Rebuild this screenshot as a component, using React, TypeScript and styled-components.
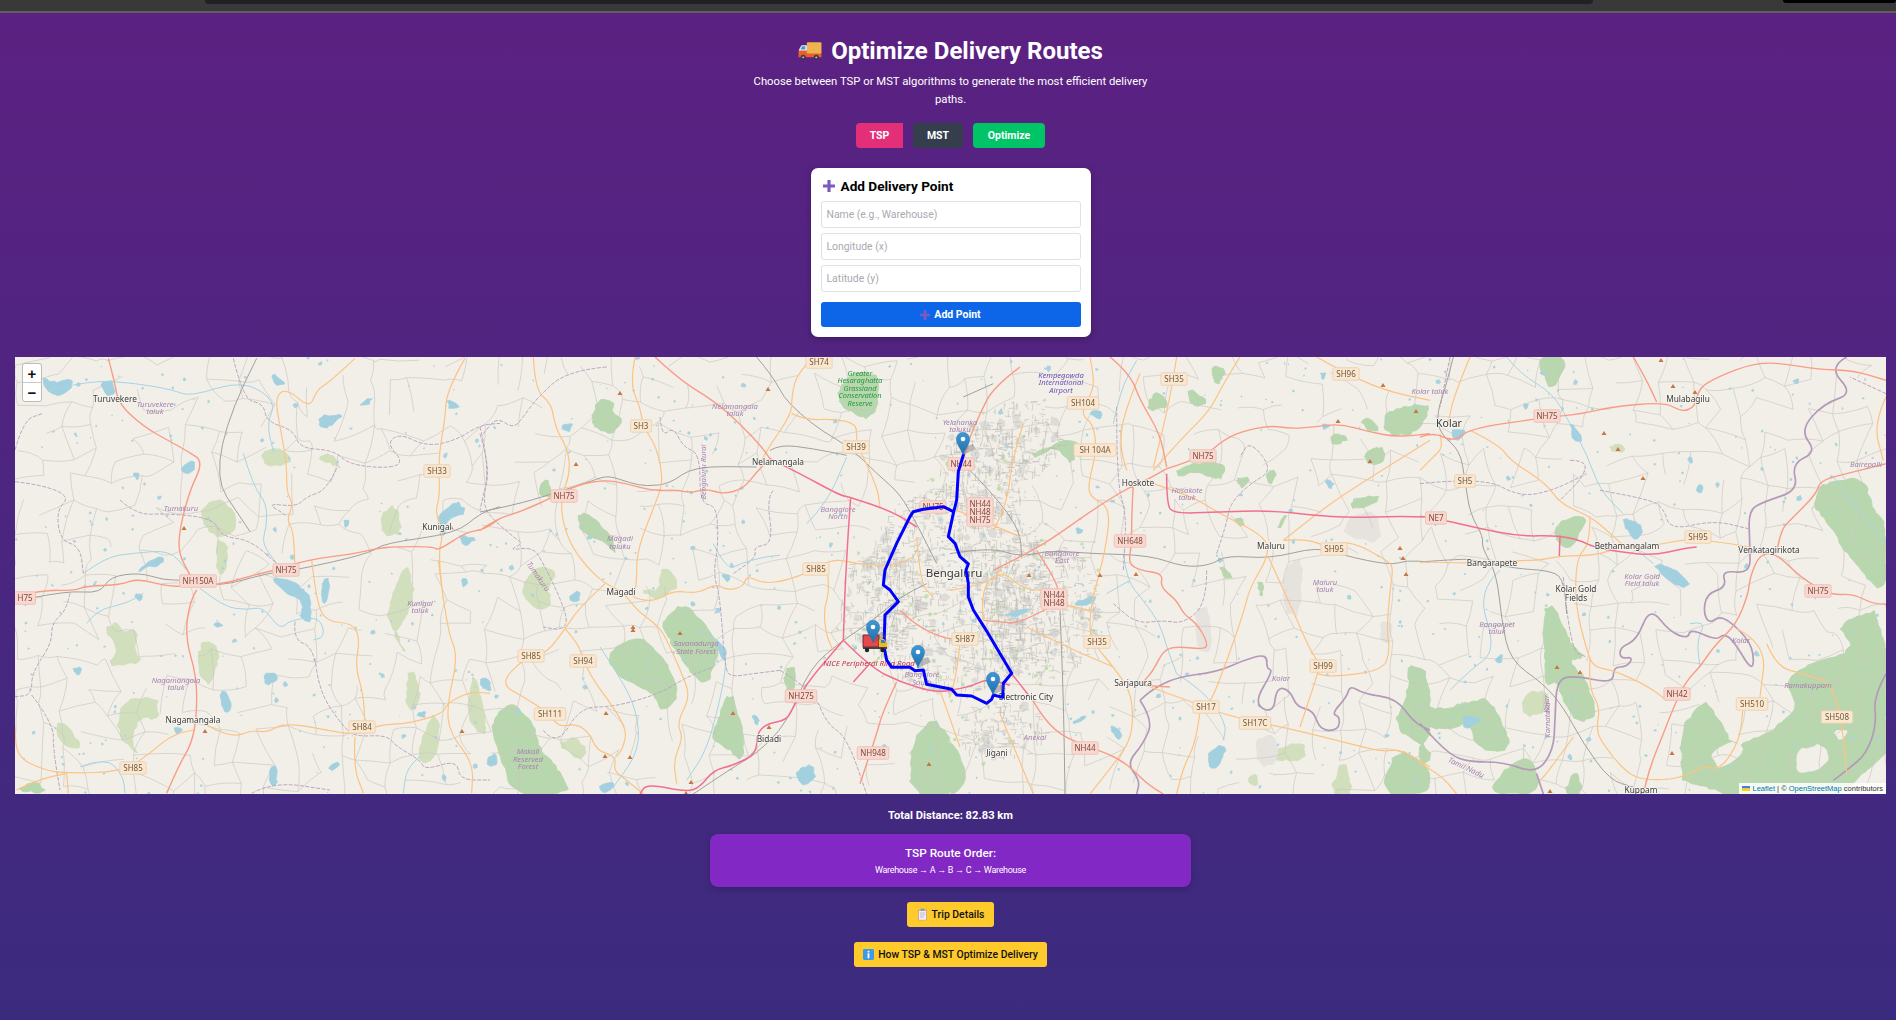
import React from 'react'
import styled, { createGlobalStyle } from 'styled-components'

const GlobalStyle = createGlobalStyle`
    html, body {
        margin: 0;
        padding: 0;
    }
    body {
        font-family: Roboto, "Noto Sans", sans-serif;
        background: #3b2b7e;
    }
`

const Page = styled.div`
    width: 1896px;
    height: 1020px;
    overflow: hidden;
    background: linear-gradient(180deg, #5c2182 0%, #3b2b7e 100%);
`

const TopBar = styled.div`
    display: flex;
    height: 11px;
    background: #393939;
    border-bottom: 2px solid #5f5f5f;
`

const TabStrip = styled.div<{ $left: number; $width: number; $height: number; $color: string }>`
    margin-left: ${(p) => p.$left}px;
    width: ${(p) => p.$width}px;
    height: ${(p) => p.$height}px;
    background: ${(p) => p.$color};
    border-radius: 0 0 6px 6px;
`

const Content = styled.div`
    display: flex;
    flex-direction: column;
    align-items: center;
    padding: 23px 10px 0 15px;
    color: #fff;
`

const Title = styled.h1`
    display: flex;
    align-items: center;
    gap: 9px;
    height: 30px;
    margin: 0;
    font-size: 24px;
    line-height: 30px;
    font-weight: 700;
`

const Lead = styled.p`
    width: 402px;
    margin: 7px 0 0;
    font-size: 11.3px;
    line-height: 18px;
    text-align: center;
`

const ModeRow = styled.div`
    display: flex;
    gap: 10px;
    margin-top: 14px;
`

const ModeButton = styled.button<{ $bg: string; $w: number; $radius: string }>`
    width: ${(p) => p.$w}px;
    height: 25px;
    padding: 0;
    border: 0;
    border-radius: ${(p) => p.$radius};
    background: ${(p) => p.$bg};
    color: #fff;
    font-family: inherit;
    font-size: 10.5px;
    font-weight: 700;
`

const Card = styled.div`
    display: flex;
    flex-direction: column;
    box-sizing: border-box;
    width: 280px;
    height: 169px;
    margin-top: 20px;
    padding: 6px 10px 10px;
    background: #fff;
    border-radius: 7px;
    box-shadow: 0 2px 6px rgba(0, 0, 0, 0.25);
`

const CardTitle = styled.div`
    display: flex;
    align-items: center;
    gap: 6px;
    height: 23px;
    margin: 0 0 4px 2px;
    color: #000;
    font-size: 13.6px;
    font-weight: 700;
`

const Field = styled.input`
    box-sizing: border-box;
    height: 27px;
    margin-bottom: 5px;
    padding: 0 5px;
    border: 1px solid #dfe1e6;
    border-radius: 3px;
    font-family: inherit;
    font-size: 10.4px;
    outline: none;
    &::placeholder {
        color: #a9a9b0;
    }
`

const AddButton = styled.button`
    display: flex;
    align-items: center;
    justify-content: center;
    gap: 4px;
    height: 25px;
    margin-top: 5px;
    border: 0;
    border-radius: 3px;
    background: #0d66e8;
    color: #fff;
    font-family: inherit;
    font-size: 10.5px;
    font-weight: 700;
`

const MapFrame = styled.div`
    position: relative;
    width: 1871px;
    height: 437px;
    margin-top: 20px;
    overflow: hidden;
    background: #f2efe9;
`

const MapDrawing = styled.svg`
    display: block;
    filter: blur(0.5px);
`

const ZoomBox = styled.div`
    position: absolute;
    top: 6px;
    left: 7px;
    width: 20px;
    height: 39px;
    background: #fff;
    border: 1px solid #bbb;
    border-radius: 3px;
    box-sizing: border-box;
`

const ZoomKey = styled.div<{ $top?: boolean }>`
    display: flex;
    align-items: center;
    justify-content: center;
    height: 18px;
    color: #111;
    font-family: "Liberation Sans", sans-serif;
    font-size: 15px;
    font-weight: 700;
    ${(p) => (p.$top ? 'border-bottom: 1px solid #ccc;' : '')}
`

const Attribution = styled.div`
    position: absolute;
    right: 0;
    bottom: 0;
    display: flex;
    align-items: center;
    gap: 3px;
    height: 11px;
    padding: 0 3px;
    background: rgba(255, 255, 255, 0.85);
    color: #333;
    font-family: "Liberation Sans", sans-serif;
    font-size: 7.5px;
    white-space: pre;
`

const AttrLink = styled.span`
    color: #0078a8;
`

const Distance = styled.div`
    height: 18px;
    margin-top: 13px;
    font-size: 11.2px;
    line-height: 18px;
    font-weight: 700;
`

const RouteBox = styled.div`
    box-sizing: border-box;
    width: 481px;
    height: 53px;
    margin-top: 9px;
    padding-top: 11px;
    border-radius: 8px;
    background: #8228c4;
    box-shadow: 0 2px 6px rgba(0, 0, 0, 0.2);
    text-align: center;
`

const RouteTitle = styled.div`
    font-size: 11.8px;
    line-height: 16px;
    font-weight: 500;
`

const RouteText = styled.div`
    margin-top: 2px;
    font-size: 9px;
    line-height: 14px;
    letter-spacing: -0.3px;
`

const YellowButton = styled.button<{ $w: number; $top: number }>`
    display: flex;
    align-items: center;
    justify-content: center;
    gap: 4px;
    box-sizing: border-box;
    width: ${(p) => p.$w}px;
    height: 25px;
    margin-top: ${(p) => p.$top}px;
    padding: 0;
    border: 0;
    border-radius: 3px;
    background: #ffca2c;
    color: #111;
    font-family: inherit;
    font-size: 10.4px;
    font-weight: 500;
`

type Region = {
    o: [number, number]
    forest?: number[][]
    pale?: number[][]
    holes?: number[][]
    water?: number[][]
    river?: number[][]
    border?: number[][]
    state?: number[][]
    rail?: number[][]
    sec?: number[][]
    pri?: number[][]
    trunk?: number[][]
}

// coordinates below are read off crops of the map, 3x, relative to `o`
const regions: Region[] = [
    {
        o: [0, 340],
        pale: [
            [780, 335, 830, 325, 870, 345, 870, 370, 800, 380],
            [950, 350, 990, 340, 1025, 385, 1000, 375],
            [595, 520, 650, 470, 710, 520, 700, 580, 640, 590],
            [645, 600, 680, 610, 685, 670, 655, 720],
            [1140, 520, 1190, 495, 1205, 580, 1150, 585],
        ],
        water: [
            [540, 380, 585, 360, 585, 395, 550, 400],
            [125, 110, 160, 130, 220, 115, 210, 155, 150, 170],
            [300, 130, 340, 120, 345, 165, 320, 165],
            [955, 230, 1035, 220, 985, 265, 960, 260],
            [1340, 180, 1390, 200, 1350, 210],
            [1075, 190, 1125, 170, 1100, 200],
            [810, 100, 860, 130, 825, 140],
            [1310, 530, 1370, 480, 1400, 515, 1345, 540, 1325, 600],
            [1380, 585, 1430, 595, 1400, 615, 1385, 610],
            [410, 700, 450, 660, 495, 645, 480, 680, 440, 680],
            [395, 400, 420, 400, 415, 425],
            [1030, 540, 1050, 540, 1040, 565],
        ],
        river: [
            [150, 150, 270, 120, 410, 130, 520, 150, 570, 170, 730, 120, 830, 185, 800, 250, 820, 335],
            [730, 340, 760, 440, 800, 490, 800, 560, 785, 610, 830, 670],
            [250, 700, 320, 650, 400, 640, 510, 630, 560, 690],
        ],
        border: [
            [45, 425, 130, 435, 210, 470, 170, 510, 180, 600, 240, 620, 250, 700],
            [360, 480, 410, 525, 500, 520, 640, 535, 665, 590, 750, 600, 830, 670],
            [700, 55, 730, 180, 790, 190, 800, 245, 880, 270, 900, 325, 1000, 330, 1050, 375, 1170, 385, 1210, 365, 1160, 310, 1200, 280, 1280, 320, 1370, 300, 1440, 255, 1500, 250],
            [1010, 385, 980, 450, 920, 470, 890, 500, 800, 490, 850, 520, 860, 530],
            [1440, 260, 1470, 380, 1440, 510],
            [45, 330, 70, 240, 130, 220],
        ],
        rail: [
            [90, 775, 200, 752, 300, 760, 330, 710, 420, 698, 490, 720, 550, 720, 660, 740, 800, 700, 890, 690, 1110, 640, 1150, 610, 1370, 580, 1440, 520, 1500, 500],
            [770, 55, 610, 365, 750, 575],
        ],
        sec: [
            [1065, 55, 990, 125, 950, 150, 930, 205, 860, 145, 825, 170, 840, 260, 860, 370, 860, 460, 880, 490, 860, 540, 880, 570, 885, 680],
            [1395, 55, 1340, 150, 1335, 240, 1315, 350, 1320, 470, 1305, 515, 1330, 580, 1315, 640, 1330, 780],
        ],
        pri: [
            [325, 55, 345, 130, 355, 190, 430, 260, 520, 310, 565, 335, 610, 365, 570, 450, 540, 560, 535, 640, 570, 705, 590, 740],
            [45, 770, 130, 750, 220, 752, 260, 738, 360, 735, 415, 715, 510, 742, 660, 735, 760, 705, 830, 690, 920, 660, 1070, 640, 1130, 625, 1190, 620, 1300, 620, 1315, 632, 1400, 575, 1450, 570, 1500, 535],
        ],
    },
    {
        o: [10, 560],
        forest: [[15, 690, 80, 665, 110, 700]],
        pale: [
            [285, 210, 320, 185, 340, 220, 385, 210, 370, 270, 400, 305, 340, 315, 295, 315, 325, 270],
            [570, 260, 590, 240, 630, 265, 605, 380, 565, 340],
            [340, 420, 440, 410, 445, 480, 390, 470, 360, 540, 390, 590, 320, 520],
            [135, 490, 170, 490, 220, 570, 150, 550],
            [1125, 160, 1190, 0, 1215, 110, 1170, 200, 1150, 220, 1190, 290, 1160, 220],
            [1185, 420, 1200, 320, 1235, 400, 1210, 460],
            [1375, 400, 1395, 340, 1425, 470, 1410, 530, 1375, 470],
            [1225, 590, 1260, 460, 1290, 490, 1280, 590, 1240, 610],
        ],
        water: [
            [780, 50, 850, 60, 880, 90, 900, 110, 905, 185, 870, 180, 880, 125, 820, 95],
            [760, 345, 800, 335, 800, 365, 770, 375],
            [630, 395, 655, 395, 665, 450, 640, 460],
            [185, 330, 215, 320, 205, 350],
            [1355, 55, 1375, 60, 1365, 85],
            [490, 500, 520, 510, 500, 525],
            [780, 620, 800, 620, 800, 680, 775, 670],
            [370, 100, 400, 100, 385, 130],
            [610, 190, 640, 190, 625, 205],
            [950, 620, 995, 605, 970, 635],
            [1410, 350, 1440, 360, 1440, 395, 1415, 385],
            [1220, 460, 1250, 450, 1240, 475],
            [940, 60, 960, 50, 950, 130, 935, 120],
        ],
        river: [
            [230, 190, 260, 150, 350, 130, 400, 100],
            [570, 85, 640, 140, 710, 150, 760, 140, 810, 210, 840, 180, 930, 170, 945, 230, 910, 240],
            [1230, 590, 1190, 620, 1180, 700],
            [210, 620, 290, 590, 340, 650, 345, 700],
        ],
        border: [
            [180, 100, 170, 150, 125, 190, 125, 250, 65, 340, 65, 405, 15, 410],
            [855, 185, 850, 240, 910, 260, 930, 400, 1000, 500, 1035, 530, 1130, 525, 1160, 560, 1230, 600, 1245, 630, 1340, 600, 1350, 660, 1440, 660],
            [725, 700, 790, 665, 960, 690],
            [65, 405, 130, 490, 130, 570, 150, 690],
        ],
        sec: [
            [905, 0, 920, 130, 950, 185, 1030, 190, 1050, 240, 1035, 320, 1060, 400, 1065, 500],
            [590, 495, 660, 535, 730, 510, 770, 518, 830, 485, 1040, 530, 1100, 495, 1200, 490, 1300, 460, 1310, 430, 1380, 395, 1440, 400],
            [1285, 0, 1310, 210, 1345, 285, 1310, 440, 1320, 520, 1390, 610, 1385, 700],
            [1035, 530, 1030, 620, 1060, 700],
            [550, 510, 490, 520, 420, 580, 340, 635, 170, 640, 100, 630, 20, 590, 15, 500],
            [170, 640, 175, 700],
            [20, 690, 80, 660, 170, 640],
        ],
        pri: [[560, 90, 540, 120, 525, 230, 560, 350, 560, 470, 545, 550, 510, 610, 470, 700]],
    },
    {
        o: [480, 357],
        forest: [
            [30, 1100, 90, 1030, 160, 1100, 180, 1180, 240, 1240, 270, 1311, 100, 1311, 60, 1200],
            [540, 800, 610, 735, 680, 810, 720, 870, 680, 990, 620, 930, 570, 850],
            [390, 880, 480, 835, 550, 900, 600, 1010, 550, 1070, 520, 1010, 420, 960, 390, 920],
            [700, 1130, 750, 990, 790, 1130, 790, 1215, 740, 1170, 700, 1150],
            [290, 480, 320, 465, 390, 530, 410, 590, 380, 560, 310, 530],
            [335, 190, 350, 130, 400, 130, 395, 170, 430, 190, 400, 230, 350, 215],
            [180, 390, 200, 365, 215, 400, 215, 420, 180, 415],
            [1290, 1311, 1295, 1150, 1360, 1080, 1420, 1160, 1440, 1311],
            [1070, 100, 1130, 40, 1200, 60, 1190, 160, 1150, 190, 1080, 140],
            [910, 940, 950, 930, 930, 1060],
        ],
        pale: [
            [130, 680, 180, 620, 230, 650, 200, 690, 215, 740, 180, 765, 130, 720],
            [480, 700, 535, 700, 550, 620, 600, 680, 540, 730],
            [230, 1160, 290, 1140, 320, 1180, 300, 1210],
            [0, 1010, 20, 1130, 0, 1130],
        ],
        water: [
            [245, 205, 280, 200, 270, 220, 250, 222],
            [950, 1240, 1000, 1220, 1005, 1270, 960, 1285],
            [270, 715, 300, 700, 295, 735, 275, 735],
            [725, 650, 750, 655, 740, 680],
            [700, 840, 740, 880, 735, 925],
            [0, 970, 30, 975, 10, 1000],
            [20, 1200, 50, 1190, 50, 1225, 25, 1225],
            [815, 1075, 840, 1085, 830, 1110],
            [355, 1280, 410, 1280, 370, 1311],
        ],
        river: [
            [700, 560, 740, 640, 780, 620, 850, 600, 900, 595],
            [660, 820, 730, 850, 740, 920, 720, 1030, 680, 1180, 620, 1270],
            [360, 870, 420, 960, 470, 1060, 480, 1180, 400, 1290],
            [980, 500, 1040, 440, 1100, 300],
        ],
        border: [
            [0, 230, 30, 330, 10, 420, 20, 470, 100, 540, 130, 560, 85, 580, 160, 570, 190, 620, 230, 700, 265, 790, 245, 820, 190, 810],
            [380, 30, 260, 40, 165, 130, 130, 180, 100, 215, 50, 180, 10, 230],
            [540, 180, 545, 240, 580, 210, 610, 270, 660, 290, 660, 440, 710, 445, 715, 560, 700, 650, 720, 720, 735, 930, 750, 960, 820, 950, 900, 940],
            [880, 400, 860, 420, 880, 560, 820, 570, 830, 600, 760, 650],
            [190, 1120, 230, 1170, 300, 1050, 400, 1050, 540, 1010, 620, 960, 700, 930],
            [900, 940, 1000, 1000, 1040, 1100, 1100, 1140, 1160, 1311],
        ],
        rail: [
            [0, 465, 100, 445, 220, 410, 340, 370, 385, 355, 450, 378, 500, 388, 570, 380, 640, 328, 830, 330],
            [830, 0, 880, 60, 910, 120, 960, 170, 1030, 225, 1110, 270, 1190, 350, 1260, 410, 1310, 500, 1370, 620],
            [870, 280, 900, 262, 1000, 275, 1100, 295],
            [1090, 850, 1180, 790, 1260, 720, 1340, 680],
            [640, 1311, 760, 1230, 830, 1190, 920, 1100, 990, 930, 1090, 850],
        ],
        sec: [
            [160, 0, 165, 100, 215, 140, 225, 210, 265, 280, 270, 350, 245, 415, 245, 480, 270, 560, 320, 630, 375, 680, 430, 705, 470, 760, 540, 810, 570, 870, 610, 960, 630, 1020, 590, 1100, 610, 1140, 580, 1210, 590, 1280],
            [375, 680, 300, 750, 255, 815, 200, 890, 130, 905, 60, 980, 130, 1020, 210, 1070, 235, 1110, 290, 1100, 330, 1130, 350, 1180, 410, 1200, 400, 1240, 440, 1270, 490, 1311],
            [255, 815, 295, 860, 310, 910, 340, 970, 400, 1050, 440, 1120, 430, 1170, 410, 1200],
            [465, 0, 450, 80, 480, 150, 490, 210, 530, 270, 550, 370, 530, 430, 490, 530, 470, 600, 470, 680, 460, 720],
            [460, 720, 510, 740, 580, 700, 650, 710, 710, 680, 740, 700, 790, 690, 800, 655, 850, 680, 920, 670, 1000, 640, 1060, 605, 1130, 620, 1190, 625, 1250, 625, 1300, 600],
            [1000, 0, 950, 50, 935, 120, 935, 170, 870, 265, 845, 310],
            [935, 170, 980, 190, 1060, 185, 1130, 200, 1130, 250],
            [1040, 620, 1050, 700, 1030, 760, 1040, 840, 1060, 880],
            [1130, 260, 1190, 380, 1200, 450],
            [1310, 540, 1320, 680, 1360, 720],
            [1380, 1000, 1440, 1170],
        ],
        pri: [
            [0, 520, 50, 485, 120, 465, 220, 420, 290, 385, 370, 368, 440, 380, 520, 402, 590, 398, 630, 408, 680, 395, 730, 412, 790, 395, 830, 345, 870, 305],
            [525, 0, 600, 70, 700, 130, 780, 200, 845, 270, 870, 305],
            [1250, 975, 1210, 1060, 1190, 1130, 1170, 1190, 1140, 1280],
            [1260, 760, 1300, 800, 1380, 840, 1440, 850],
        ],
        trunk: [
            [870, 305, 960, 350, 1080, 415, 1110, 420, 1240, 465, 1310, 510],
            [1112, 420, 1105, 520, 1100, 610, 1095, 700, 1090, 850],
            [1090, 850, 1170, 930, 1260, 975, 1360, 1005, 1420, 1000],
            [1090, 850, 1030, 920, 980, 980, 940, 1050, 920, 1090, 860, 1100, 830, 1130, 830, 1190, 760, 1225, 700, 1240, 660, 1290, 620, 1305, 500, 1280, 480, 1311],
            [1120, 975, 1165, 925],
        ],
    },
    {
        o: [950, 357],
        forest: [
            [600, 130, 625, 100, 660, 150, 590, 160],
            [780, 20, 830, 40, 800, 90],
            [715, 90, 780, 140, 720, 150],
            [680, 340, 730, 320, 830, 320, 810, 375, 740, 340, 690, 360],
            [250, 290, 380, 235, 370, 330, 320, 270, 250, 300],
            [1200, 430, 1290, 415, 1280, 440, 1210, 460],
            [980, 510, 1010, 470, 995, 515],
            [810, 620, 850, 660, 820, 665],
            [920, 670, 940, 680, 935, 725],
            [860, 370, 900, 360, 880, 400],
            [1040, 610, 1050, 650, 1035, 640],
            [1290, 1311, 1340, 1170, 1440, 1230, 1440, 1311],
            [1330, 1110, 1380, 990, 1370, 920, 1440, 950, 1440, 1180],
            [1230, 190, 1260, 180, 1290, 220, 1250, 220],
            [1300, 170, 1380, 145, 1440, 150, 1400, 230, 1310, 235],
            [1240, 290, 1290, 265, 1310, 300, 1280, 325, 1250, 320],
            [1140, 230, 1200, 240, 1150, 270],
            [850, 490, 880, 480, 880, 510],
            [950, 340, 980, 340, 960, 390],
            [0, 1150, 30, 1190, 50, 1270, 20, 1311, 0, 1311],
        ],
        pale: [
            [950, 1190, 1060, 1150, 1070, 1210, 960, 1210],
            [1140, 1311, 1180, 1200, 1210, 1311],
            [890, 1270, 920, 1250, 920, 1290],
        ],
        water: [
            [160, 770, 250, 750, 210, 780],
            [370, 740, 440, 715, 430, 740, 380, 745],
            [770, 1200, 800, 1165, 830, 1170, 810, 1220, 780, 1240],
            [480, 1100, 520, 1130, 500, 1150],
            [360, 1100, 410, 1070, 400, 1090],
            [375, 510, 405, 520, 380, 530],
            [410, 165, 455, 160, 450, 190],
            [1110, 50, 1130, 50, 1120, 70],
            [1115, 200, 1145, 205, 1125, 220],
            [1125, 370, 1155, 375, 1140, 400],
        ],
        river: [
            [520, 590, 530, 670, 580, 730, 630, 800, 650, 870, 680, 950],
            [540, 670, 470, 710],
            [680, 950, 760, 1000, 830, 1100, 820, 1150],
            [490, 200, 510, 100, 560, 10],
        ],
        border: [
            [500, 150, 500, 380, 530, 470, 520, 640],
            [800, 590, 830, 500, 840, 440, 900, 380, 970, 340, 900, 250, 870, 300],
            [770, 640, 770, 740, 700, 800, 640, 790, 560, 800, 490, 740],
        ],
        state: [
            [570, 1030, 600, 1000, 680, 960, 800, 945, 880, 910, 950, 890, 950, 935, 970, 940, 910, 1040, 970, 1070, 980, 990, 1020, 1000, 1040, 1050, 1090, 1060, 1110, 1120, 1165, 1120, 1170, 1080, 1145, 1070, 1190, 1020, 1200, 985, 1240, 1010, 1340, 1025, 1390, 1095, 1440, 1120],
            [570, 1030, 610, 1090, 580, 1160, 530, 1220, 570, 1270, 560, 1311],
        ],
        rail: [
            [0, 590, 120, 570, 210, 600, 300, 580, 430, 590, 600, 595, 700, 630, 780, 625, 830, 595, 960, 605, 1100, 570, 1180, 595, 1320, 625, 1370, 610, 1440, 615],
            [40, 320, 130, 410, 210, 520, 215, 600],
            [330, 760, 340, 1000, 345, 1311],
            [40, 120, 130, 80],
        ],
        sec: [
            [680, 0, 660, 130, 610, 330],
            [870, 0, 820, 80, 780, 160, 700, 240, 610, 340],
            [610, 380, 730, 420, 800, 465, 950, 540, 955, 600, 900, 690, 880, 770, 820, 940, 780, 1040, 750, 1060],
            [955, 600, 1020, 740, 1080, 880, 1110, 920, 1100, 960, 1050, 1110],
            [1000, 550, 1100, 470, 1200, 400, 1440, 250],
            [1000, 550, 1070, 545, 1130, 570, 1200, 550, 1310, 610, 1330, 630, 1320, 700, 1310, 820, 1320, 880, 1300, 940, 1150, 960, 1100, 950],
            [1100, 0, 1170, 40, 1300, 100, 1440, 130],
            [420, 0, 430, 50, 430, 100, 390, 170, 430, 200, 440, 280, 415, 380, 420, 420, 480, 450, 470, 560, 440, 680, 420, 760, 420, 840, 440, 870, 490, 930, 540, 1000, 550, 1080, 540, 1150, 500, 1210, 420, 1311],
            [570, 50, 520, 170, 510, 270, 530, 340],
            [220, 200, 190, 290, 170, 440, 130, 520],
            [20, 460, 120, 500, 210, 540],
            [600, 990, 740, 1040, 830, 1075, 950, 1100, 1060, 1125, 1200, 1160, 1300, 1185, 1350, 1175, 1440, 1230],
            [750, 1060, 740, 1150, 700, 1230, 680, 1311],
            [230, 810, 350, 870, 490, 930],
            [150, 1070, 220, 1240, 250, 1311],
            [30, 860, 20, 950, 0, 1020],
            [330, 740, 420, 760],
            [100, 790, 90, 690, 160, 640, 220, 700, 330, 700],
            [0, 700, 120, 680, 150, 640],
        ],
        pri: [
            [480, 0, 540, 50, 570, 130, 630, 230, 650, 330],
            [650, 335, 760, 300, 820, 250, 870, 225, 960, 205, 1020, 215, 1090, 210, 1170, 200, 1260, 225, 1340, 240, 1440, 230],
            [210, 30, 130, 90, 90, 170, 60, 240, 40, 300],
            [650, 335, 590, 370, 540, 390, 440, 450, 300, 550, 210, 600, 130, 640],
            [550, 380, 545, 470, 545, 560, 535, 620, 570, 640, 640, 650, 630, 690, 680, 730, 700, 770, 740, 800, 770, 850, 770, 878, 680, 868, 640, 880, 610, 940, 580, 975],
            [240, 1015, 270, 1070, 330, 1135, 420, 1170, 520, 1210, 590, 1280, 640, 1311],
            [260, 580, 320, 670, 330, 735],
            [300, 750, 210, 800, 150, 795, 100, 790],
            [660, 990, 580, 985],
        ],
        trunk: [
            [650, 350, 650, 440, 670, 470, 800, 465, 960, 460, 1090, 475, 1200, 482, 1340, 478, 1440, 480],
            [185, 950, 240, 1020],
            [0, 1000, 60, 990, 110, 965, 180, 985],
        ],
    },
    {
        o: [1420, 357],
        forest: [
            [1185, 430, 1200, 380, 1330, 360, 1360, 460, 1398, 500, 1398, 725, 1270, 580, 1240, 520, 1185, 450],
            [1398, 750, 1250, 800, 1310, 880, 1140, 930, 1100, 980, 1135, 1050, 1060, 1120, 1020, 1140, 940, 1170, 880, 1060, 850, 1030, 780, 1120, 790, 1311, 1398, 1311],
            [0, 1030, 60, 1060, 130, 1040, 210, 1020, 270, 1150, 250, 1190, 170, 1170, 150, 1100, 60, 1120, 0, 1100],
            [0, 1150, 40, 1200, 0, 1230],
            [200, 1311, 270, 1220, 340, 1200, 360, 1311],
            [430, 1311, 470, 1230, 490, 1311],
            [345, 0, 445, 0, 400, 110],
            [400, 520, 430, 485, 505, 478, 480, 520, 460, 570, 420, 570],
            [370, 760, 400, 740, 450, 860, 495, 900, 440, 910, 500, 970, 530, 1070, 480, 1100, 440, 1050, 410, 970, 375, 990],
            [0, 150, 30, 145, 0, 220],
        ],
        pale: [
            [310, 1010, 380, 1000, 385, 1060, 310, 1080],
            [565, 270, 590, 258, 620, 275, 590, 290],
        ],
        holes: [
            [870, 1190, 940, 1150, 980, 1180, 900, 1240],
            [1130, 1180, 1210, 1160, 1230, 1210, 1190, 1240, 1130, 1250],
            [1240, 1120, 1290, 1120, 1260, 1150],
        ],
        water: [
            [610, 480, 650, 495, 670, 515, 650, 550, 620, 520],
            [700, 620, 760, 630, 810, 680, 790, 695, 730, 660],
            [95, 215, 140, 220, 115, 255, 95, 240],
            [450, 190, 490, 250, 460, 255],
            [225, 905, 250, 890, 240, 920],
            [130, 1070, 190, 1090, 130, 1120],
            [835, 385, 850, 385, 845, 410, 830, 405],
            [810, 300, 820, 320, 800, 310],
            [310, 140, 330, 140, 320, 160],
            [1115, 70, 1135, 65, 1130, 80],
        ],
        river: [
            [260, 0, 300, 50, 400, 110, 450, 200, 500, 290, 540, 400, 610, 470],
            [640, 570, 700, 620],
            [810, 800, 860, 790, 830, 850, 840, 930],
            [240, 640, 170, 700, 230, 880, 150, 940, 90, 1000],
            [1240, 360, 1330, 480, 1398, 560],
        ],
        border: [
            [0, 380, 190, 360, 300, 420, 400, 400, 500, 350],
            [540, 400, 680, 425, 730, 450, 750, 520, 880, 490, 985, 515],
            [1398, 110, 1290, 60],
            [450, 310, 500, 310, 490, 360, 420, 430],
            [90, 0, 60, 150],
            [430, 660, 450, 880, 500, 900],
        ],
        state: [
            [1280, 0, 1225, 30, 1300, 110, 1210, 140, 1140, 220, 1190, 285, 1115, 320, 1135, 400, 1030, 435, 985, 460, 990, 570, 990, 650, 905, 640, 920, 690, 860, 710, 850, 770, 870, 800, 900, 775, 950, 810, 1000, 870, 1000, 950, 940, 850, 910, 830, 890, 850, 810, 815, 805, 845, 750, 825, 690, 750, 650, 850, 600, 870, 600, 905, 640, 900, 620, 930, 580, 930, 580, 980, 460, 955, 410, 970, 405, 1090, 400, 1180, 350, 1250, 250, 1215, 150, 1215, 90, 1195, 0, 1100],
            [350, 1250, 370, 1311],
            [1398, 950, 1360, 1020, 1370, 1100, 1340, 1190, 1280, 1240, 1240, 1270],
        ],
        rail: [
            [100, 0, 80, 80, 50, 170, 60, 230, 120, 280, 135, 370, 150, 470, 190, 540, 185, 570, 230, 650, 245, 790, 270, 910, 370, 980, 430, 1050, 490, 1160, 570, 1270, 640, 1290],
            [0, 615, 130, 605, 160, 610, 290, 635, 380, 640, 430, 660, 440, 770],
        ],
        sec: [
            [150, 0, 100, 120, 85, 200],
            [60, 230, 70, 270, 40, 300, 0, 340],
            [150, 220, 240, 265, 270, 310, 380, 380, 420, 440, 510, 478, 560, 520, 610, 565],
            [510, 478, 510, 560, 470, 600, 465, 740, 500, 880, 520, 930, 580, 940, 680, 985, 740, 1030],
            [0, 615, 150, 620, 300, 610, 360, 610, 420, 597, 530, 595, 600, 570, 710, 565, 800, 545, 900, 555, 990, 570],
            [510, 900, 505, 990, 540, 1050, 530, 1110, 540, 1150, 620, 1250, 680, 1270, 780, 1265, 850, 1225, 900, 1240, 960, 1150, 970, 1040],
            [950, 815, 1040, 860, 1020, 1020],
            [1040, 860, 1070, 930, 1150, 950, 1240, 980, 1270, 1130, 1280, 1250],
            [460, 1140, 380, 1250, 360, 1270],
            [1398, 120, 1360, 200, 1390, 310],
            [0, 1220, 60, 1250, 110, 1311],
        ],
        pri: [
            [0, 240, 40, 225, 100, 255, 150, 215, 350, 185, 490, 170, 570, 150, 735, 135, 785, 165, 825, 150, 835, 100, 870, 70, 980, 25, 1060, 15, 1200, 38, 1300, 40, 1398, 70],
            [640, 0, 680, 70, 710, 135],
            [1398, 742, 1360, 742, 1300, 710, 1230, 715, 1140, 660, 1070, 590, 1020, 590, 990, 660, 985, 710, 950, 800, 880, 870, 840, 930, 800, 970, 765, 1040, 730, 1130, 690, 1230, 670, 1311],
            [1070, 590, 1080, 520, 1120, 480, 1190, 410, 1200, 370, 1300, 345, 1398, 320],
        ],
        trunk: [
            [0, 478, 75, 490, 180, 515, 300, 538, 410, 535, 480, 550, 520, 570, 600, 585, 700, 595, 790, 575, 830, 570],
            [420, 535, 418, 597],
        ],
    },
]

const urban = [
    [1195, 480, 1280, 460, 1300, 560, 1180, 540],
    [1000, 630, 1060, 600, 1050, 780, 1000, 760],
    [1290, 790, 1330, 800, 1320, 860, 1290, 850],
    [735, 750, 780, 750, 785, 890, 740, 880],
    [910, 1150, 980, 1130, 985, 1220, 930, 1230],
]

let seed = 20240611
const rnd = () => {
    seed = (seed * 1664525 + 1013904223) % 4294967296
    return seed / 4294967296
}

const smooth = (p: number[]) => {
    const pts: [number, number][] = []
    for (let i = 0; i < p.length; i += 2) pts.push([p[i], p[i + 1]])
    let d = `M${pts[0][0]} ${pts[0][1]}`
    for (let i = 1; i < pts.length - 1; i++) {
        const n = pts[i + 1]
        d += `Q${pts[i][0]} ${pts[i][1]} ${(pts[i][0] + n[0]) / 2} ${(pts[i][1] + n[1]) / 2}`
    }
    const e = pts[pts.length - 1]
    return d + `L${e[0]} ${e[1]}`
}

const straight = (p: number[], closed = false) => {
    let d = ''
    for (let i = 0; i < p.length; i += 2) d += `${i === 0 ? 'M' : 'L'}${p[i]} ${p[i + 1]}`
    return closed ? d + 'Z' : d
}

// cuts the corners of a polygon once, then breaks the edges into a ragged outline
const rough = (p: number[]) => {
    const cut: number[] = []
    const n = p.length / 2
    for (let i = 0; i < n; i++) {
        const ax = p[i * 2]
        const ay = p[i * 2 + 1]
        const bx = p[((i + 1) % n) * 2]
        const by = p[((i + 1) % n) * 2 + 1]
        cut.push(ax + (bx - ax) * 0.22, ay + (by - ay) * 0.22, ax + (bx - ax) * 0.78, ay + (by - ay) * 0.78)
    }
    const out: number[] = []
    const m = cut.length / 2
    for (let i = 0; i < m; i++) {
        const ax = cut[i * 2]
        const ay = cut[i * 2 + 1]
        const bx = cut[((i + 1) % m) * 2]
        const by = cut[((i + 1) % m) * 2 + 1]
        const parts = Math.max(1, Math.ceil(Math.hypot(bx - ax, by - ay) / 5))
        for (let k = 0; k < parts; k++) {
            const t = k / parts
            out.push(ax + (bx - ax) * t + (rnd() - 0.5) * 2.2, ay + (by - ay) * t + (rnd() - 0.5) * 2.2)
        }
    }
    return straight(out, true)
}

const place = (o: [number, number], p: number[]) =>
    p.map((v, i) => (i % 2 === 0 ? o[0] + v / 3 : o[1] + v / 3))

const lineLayer = (key: keyof Omit<Region, 'o'>) =>
    regions.flatMap((r) => (r[key] || []).map((p) => smooth(place(r.o, p)))).join('')

const areaLayer = (key: keyof Omit<Region, 'o'>) =>
    regions.flatMap((r) => (r[key] || []).map((p) => rough(place(r.o, p)))).join('')

const buildMinorRoads = () => {
    const step = 25
    const nodes: [number, number][][] = []
    for (let i = 0; i * step < 1900; i++) {
        nodes[i] = []
        for (let j = 0; j * step < 460; j++) {
            nodes[i][j] = [
                15 + i * step + (rnd() - 0.5) * 20,
                357 + j * step + (rnd() - 0.5) * 20,
            ]
        }
    }
    let d = ''
    nodes.forEach((col, i) =>
        col.forEach((n, j) => {
            const right = nodes[i + 1]?.[j]
            const down = col[j + 1]
            const wob = () => (rnd() - 0.5) * 8
            if (right && rnd() > 0.42)
                d += `M${n[0]} ${n[1]}Q${(n[0] + right[0]) / 2 + wob()} ${(n[1] + right[1]) / 2 + wob()} ${right[0]} ${right[1]}`
            if (down && rnd() > 0.42)
                d += `M${n[0]} ${n[1]}Q${(n[0] + down[0]) / 2 + wob()} ${(n[1] + down[1]) / 2 + wob()} ${down[0]} ${down[1]}`
        })
    )
    return d
}

const blob = (x: number, y: number, r: number) => {
    const a = rnd() * 3
    const pts: number[] = []
    for (let i = 0; i < 5; i++) {
        const k = a + (i * Math.PI * 2) / 5
        const rr = r * (0.6 + rnd() * 0.8)
        pts.push(x + Math.cos(k) * rr, y + Math.sin(k) * rr * (0.7 + rnd() * 0.6))
    }
    return straight(pts, true)
}

const buildPonds = () => {
    let d = ''
    for (let i = 0; i < 760; i++) {
        d += blob(15 + rnd() * 1871, 357 + rnd() * 437, rnd() < 0.1 ? 2.6 : 0.8 + rnd() * 0.9)
    }
    return d
}

// dense street grid and green specks around the city
const buildCity = () => {
    let streets = ''
    let greens = ''
    let patches = ''
    const spots = [
        [955, 590, 95, 105],
        [1040, 610, 60, 70],
        [985, 470, 45, 50],
        [1020, 440, 40, 40],
        [880, 600, 40, 55],
        [1000, 730, 45, 30],
    ]
    spots.forEach(([cx, cy, rx, ry]) => {
        const count = Math.round(rx * ry * 0.11)
        for (let i = 0; i < count; i++) {
            const t = rnd() * Math.PI * 2
            const r = Math.sqrt(rnd())
            const x = cx + Math.cos(t) * rx * r
            const y = cy + Math.sin(t) * ry * r
            const len = 2 + rnd() * 6
            if (rnd() > 0.5) streets += `M${x} ${y}l${len} ${(rnd() - 0.5) * 2}`
            else streets += `M${x} ${y}l${(rnd() - 0.5) * 2} ${len}`
        }
        for (let i = 0; i < count / 18; i++) {
            const t = rnd() * Math.PI * 2
            const r = Math.sqrt(rnd()) * 1.25
            greens += blob(cx + Math.cos(t) * rx * r, cy + Math.sin(t) * ry * r, 0.8 + rnd() * 1.6)
        }
        for (let i = 0; i < count / 14; i++) {
            const t = rnd() * Math.PI * 2
            const r = Math.sqrt(rnd())
            patches += blob(cx + Math.cos(t) * rx * r, cy + Math.sin(t) * ry * r, 2 + rnd() * 4)
        }
    })
    return { streets, greens, patches }
}

const minorRoads = buildMinorRoads()
const ponds = buildPonds()
const city = buildCity()
const paleAreas = areaLayer('pale')
const forestAreas = areaLayer('forest')
const holeAreas = areaLayer('holes')
const waterAreas = areaLayer('water')
const urbanAreas = urban.map((p) => rough(place([950, 357], p))).join('')

const peaks = [
    [184, 528], [205, 731], [451, 527], [462, 731], [620, 393], [576, 464], [633, 627], [680, 633],
    [633, 630], [606, 713], [605, 756], [630, 757], [733, 713], [691, 782], [686, 793], [769, 727],
    [768, 389], [929, 764], [1029, 575], [1100, 575], [1383, 385], [1338, 421], [1416, 411],
    [1370, 461], [1400, 548], [1403, 558], [1406, 574], [1661, 360], [1695, 392], [1673, 386],
    [1604, 433], [1618, 449], [1643, 478], [1557, 667], [1580, 672], [1672, 753], [1550, 791], [1136, 574],
]

const labels: [number, number, string][] = [
    [115, 399, 'Turuvekere'], [437, 527, 'Kunigal'], [193, 720, 'Nagamangala'], [621, 592, 'Magadi'],
    [778, 462, 'Nelamangala'], [769, 739, 'Bidadi'], [1138, 483, 'Hoskote'], [1271, 546, 'Maluru'],
    [1133, 683, 'Sarjapura'], [1026, 697, 'Electronic City'], [997, 753, 'Jigani'], [1688, 399, 'Mulabagilu'],
    [1492, 563, 'Bangarapete'], [1627, 546, 'Bethamangalam'], [1769, 550, 'Venkatagirikota'],
    [1576, 589, 'Kolar Gold'], [1576, 598, 'Fields'], [1641, 790, 'Kuppam'],
]

const regionNames: [number, number, string][] = [
    [155, 404, 'Turuvekere'], [155, 411, 'taluk'], [181, 508, 'Tumakuru'], [420, 603, 'Kunigal'],
    [420, 610, 'taluk'], [176, 680, 'Nagamangala'], [176, 687, 'taluk'], [620, 538, 'Magadi'],
    [620, 546, 'taluku'], [735, 406, 'Nelamangala'], [735, 413, 'taluk'], [838, 509, 'Bangalore'],
    [838, 516, 'North'], [528, 751, 'Makali'], [528, 759, 'Reserved'], [528, 766, 'Forest'],
    [696, 643, 'Savanadurga'], [696, 651, 'State Forest'], [922, 674, 'Bangalore'], [922, 682, 'South'],
    [960, 422, 'Yelahanka'], [960, 429, 'taluku'], [1062, 553, 'Bangalore'], [1062, 560, 'East'],
    [1187, 490, 'Hosakote'], [1187, 497, 'taluk'], [1325, 582, 'Maluru'], [1325, 589, 'taluk'],
    [1035, 737, 'Anekal'], [1430, 391, 'Kolar taluk'], [1642, 576, 'Kolar Gold'], [1642, 583, 'Field taluk'],
    [1497, 624, 'Bangarpet'], [1497, 631, 'taluk'], [1866, 464, 'Bairepalli'], [1808, 685, 'Ramakuppam'],
    [1281, 678, 'Kolar'], [1741, 640, 'Kolar'],
]

const rotatedNames: [number, number, number, string][] = [
    [1465, 770, 25, 'Tamil Nadu'], [1550, 720, -90, 'Karnataka'], [1549, 704, -90, 'Kolar'],
    [706, 472, -90, 'Bengaluru Rural'], [536, 578, 55, 'Tumakuru'],
]

const airportLines: [number, string][] = [[376, 'Kempegowda'], [383, 'International'], [391, 'Airport']]
const reserveLines: [number, string][] = [
    [374, 'Greater'], [381, 'Hesaraghatta'], [389, 'Grassland'], [396, 'Conservation'], [404, 'Reserve'],
]

const shields: [number, number, string[], 'pri' | 'sec'][] = [
    [286, 570, ['NH75'], 'pri'], [198, 581, ['NH150A'], 'pri'], [437, 471, ['SH33'], 'sec'], [25, 598, ['H75'], 'pri'],
    [362, 727, ['SH84'], 'sec'], [133, 768, ['SH85'], 'sec'], [819, 362, ['SH74'], 'sec'], [641, 426, ['SH3'], 'sec'],
    [856, 447, ['SH39'], 'sec'], [564, 496, ['NH75'], 'pri'], [816, 569, ['SH85'], 'sec'], [531, 656, ['SH85'], 'sec'],
    [583, 661, ['SH94'], 'sec'], [550, 714, ['SH111'], 'sec'], [801, 696, ['NH275'], 'pri'], [873, 753, ['NH948'], 'pri'],
    [1174, 379, ['SH35'], 'sec'], [1346, 374, ['SH96'], 'sec'], [1083, 403, ['SH104'], 'sec'], [1095, 450, ['SH 104A'], 'sec'],
    [1203, 456, ['NH75'], 'pri'], [980, 512, ['NH44', 'NH48', 'NH75'], 'pri'], [1130, 541, ['NH648'], 'pri'],
    [1334, 549, ['SH95'], 'sec'], [1054, 599, ['NH44', 'NH48'], 'pri'], [965, 639, ['SH87'], 'sec'],
    [1097, 642, ['SH35'], 'sec'], [1323, 666, ['SH99'], 'sec'], [1206, 707, ['SH17'], 'sec'], [1255, 723, ['SH17C'], 'sec'],
    [1085, 748, ['NH44'], 'pri'], [961, 464, ['NH44'], 'pri'], [933, 507, ['NH75'], 'pri'], [1547, 416, ['NH75'], 'pri'],
    [1465, 481, ['SH5'], 'sec'], [1436, 518, ['NE7'], 'pri'], [1698, 537, ['SH95'], 'sec'], [1818, 591, ['NH75'], 'pri'],
    [1677, 694, ['NH42'], 'pri'], [1752, 704, ['SH510'], 'sec'], [1837, 717, ['SH508'], 'sec'],
]

const routeLine = place([820, 420], [
    430, 105, 415, 155, 410, 240, 400, 280, 385, 350, 405, 370, 420, 410, 445, 432, 438, 450, 445, 490, 445, 530, 460, 570,
    495, 625, 575, 760, 550, 790, 548, 832, 520, 825, 515, 838, 500, 850, 455, 828, 410, 825, 395, 808, 320, 793, 310, 750,
    285, 752, 270, 742, 215, 742, 200, 720, 192, 680, 195, 585, 235, 545, 210, 510, 190, 495, 195, 450, 230, 370, 270, 290,
    280, 275, 310, 268, 370, 260, 400, 275,
])

const pins: [number, number][] = [[963, 455], [873, 643], [918, 668], [993, 695]]

const PlusIcon = ({ size }: { size: number }) => (
    <svg width={size} height={size} viewBox="0 0 12 12">
        <path d="M4.400 0h3.200v4.400H12v3.200H7.600V12H4.400V7.600H0V4.400h4.400z" fill="#7a5cc0" />
    </svg>
)

const TitleTruck = () => (
    <svg width="24" height="20" viewBox="0 0 23 19">
        <rect x="8.500" y="1" width="14" height="11.500" rx="1" fill="#eeb44f" />
        <path d="M1 8l2.400-4H8.500v9H1z" fill="#f4f4f4" />
        <path d="M2.200 8l1.800-3h3v3z" fill="#3f9bdc" />
        <path d="M0.500 9h8v3h14v3.400H0.500z" fill="#ea5a33" />
        <circle cx="5" cy="15.600" r="2.400" fill="#3c3c3c" />
        <circle cx="5" cy="15.600" r="0.900" fill="#ccc" />
        <circle cx="17.500" cy="15.600" r="2.400" fill="#3c3c3c" />
        <circle cx="17.500" cy="15.600" r="0.900" fill="#ccc" />
    </svg>
)

const ClipboardIcon = () => (
    <svg width="11" height="13" viewBox="0 0 11 13">
        <rect x="1" y="1.500" width="9" height="11" rx="1" fill="#c9a98f" />
        <rect x="2" y="2.800" width="7" height="9" fill="#f3eef3" />
        <rect x="3.500" y="0.500" width="4" height="2.400" rx="0.600" fill="#9a9aa6" />
        <path d="M3 5h5M3 7h5M3 9h4" stroke="#b9a7c7" strokeWidth="0.800" />
    </svg>
)

const InfoIcon = () => (
    <svg width="11" height="11" viewBox="0 0 11 11">
        <rect width="11" height="11" rx="1.400" fill="#3d9ae8" />
        <rect x="4.600" y="1.800" width="1.800" height="1.600" fill="#fff" />
        <rect x="4.600" y="4.300" width="1.800" height="5" fill="#fff" />
    </svg>
)

const Pin = ({ x, y }: { x: number; y: number }) => (
    <g transform={`translate(${x - 7} ${y - 23})`}>
        <path d="M7 23L20 17l-3-5-6 2z" fill="#555" opacity="0.35" />
        <path d="M7 23C5.500 17.500 0.300 12.500 0.300 7a6.700 6.700 0 0 1 13.400 0C13.700 12.500 8.500 17.500 7 23z" fill="url(#pinFill)" stroke="#2a6fa8" strokeWidth="0.400" />
        <circle cx="7" cy="7" r="2.300" fill="#fff" />
    </g>
)

const MapTruck = ({ x, y }: { x: number; y: number }) => (
    <g transform={`translate(${x} ${y})`}>
        <rect x="0" y="0" width="16" height="12" fill="#e8474c" stroke="#5a1a1e" strokeWidth="0.800" />
        <rect x="0" y="12" width="24" height="2" fill="#444" />
        <path d="M16 4h5l3 4v4h-8z" fill="#f2b61e" />
        <path d="M18 5h3l1.800 3H18z" fill="#2f7fc4" />
        <circle cx="4" cy="15" r="2.200" fill="#222" />
        <circle cx="19.500" cy="15" r="2.200" fill="#222" />
    </g>
)

const Shield = ({ x, y, lines, type }: { x: number; y: number; lines: string[]; type: 'pri' | 'sec' }) => {
    const longest = Math.max(...lines.map((l) => l.length))
    const w = longest * 5.300 + 5
    const h = lines.length * 8 + 4.500
    return (
        <g>
            <rect
                x={x - w / 2}
                y={y - h / 2}
                width={w}
                height={h}
                rx="1.500"
                fill={type === 'pri' ? '#fbd8cf' : '#fbe6cf'}
                stroke={type === 'pri' ? '#e8bcb0' : '#e6cfae'}
                strokeWidth="0.800"
            />
            {lines.map((l, i) => (
                <text
                    key={l}
                    x={x}
                    y={y - ((lines.length - 1) * 8) / 2 + i * 8 + 3}
                    fontSize="8"
                    fill={type === 'pri' ? '#7a4a40' : '#6d5a3c'}
                    textAnchor="middle"
                >
                    {l}
                </text>
            ))}
        </g>
    )
}

const RouteMap = () => (
    <MapDrawing width="1871" height="437" viewBox="15 357 1871 437" fontFamily="Noto Sans, sans-serif">
        <defs>
            <linearGradient id="pinFill" x1="0" y1="0" x2="0" y2="1">
                <stop offset="0" stopColor="#3f98d8" />
                <stop offset="1" stopColor="#1f6ea8" />
            </linearGradient>
        </defs>
        <rect x="15" y="357" width="1871" height="437" fill="#f2efe9" />
        <path d={paleAreas} fill="#d2dfbd" stroke="#d2dfbd" strokeWidth="1" strokeLinejoin="round" />
        <path d={forestAreas} fill="#b9d7ae" stroke="#b9d7ae" strokeWidth="1" strokeLinejoin="round" />
        <path d={holeAreas} fill="#f2efe9" stroke="#f2efe9" strokeWidth="1" strokeLinejoin="round" />
        <path d={urbanAreas} fill="#e6e3df" />
        <path d={city.patches} fill="#dedcd8" />
        <path d={city.greens} fill="#c4e2ae" />
        <path d={minorRoads} fill="none" stroke="#c9c6c0" strokeWidth="0.650" />
        <path d={city.streets} fill="none" stroke="#bab7b2" strokeWidth="0.550" />
        <path d={ponds} fill="#aad3df" />
        <path d={waterAreas} fill="#a3d0df" stroke="#a3d0df" strokeWidth="0.800" strokeLinejoin="round" />
        <path d={lineLayer('river')} fill="none" stroke="#a6d4e4" strokeWidth="1" />
        <path d={lineLayer('border')} fill="none" stroke="#bba6bd" strokeWidth="1" strokeDasharray="4 1.500" />
        <path d={lineLayer('state')} fill="none" stroke="#b49ab8" strokeWidth="1.700" />
        <path d={lineLayer('rail')} fill="none" stroke="#a2a09b" strokeWidth="1" />
        <path d={lineLayer('sec')} fill="none" stroke="#fcc383" strokeWidth="1.200" />
        <path d={lineLayer('pri')} fill="none" stroke="#f99c85" strokeWidth="1.400" />
        <path d={lineLayer('trunk')} fill="none" stroke="#f2708f" strokeWidth="1.500" />
        {peaks.map(([x, y]) => (
            <path key={`${x}-${y}`} d={`M${x - 2.500} ${y + 2}L${x} ${y - 2}L${x + 2.500} ${y + 2}Z`} fill="#c4773f" />
        ))}
        {shields.map(([x, y, lines, type]) => (
            <Shield key={`${x}-${y}`} x={x} y={y} lines={lines} type={type} />
        ))}
        <g fontSize="7.600" fontStyle="italic" fill="#a583ad" textAnchor="middle">
            {regionNames.map(([x, y, t]) => (
                <text key={`${x}-${y}`} x={x} y={y + 2.500}>
                    {t}
                </text>
            ))}
            {rotatedNames.map(([x, y, r, t]) => (
                <text key={t + x} x={x} y={y} transform={`rotate(${r} ${x} ${y})`}>
                    {t}
                </text>
            ))}
        </g>
        <g fontSize="7.600" fontStyle="italic" fill="#6d52b5" textAnchor="middle">
            {airportLines.map(([y, t]) => (
                <text key={t} x="1061" y={y + 2}>
                    {t}
                </text>
            ))}
        </g>
        <g fontSize="7.400" fontStyle="italic" fill="#1f9a3c" textAnchor="middle">
            {reserveLines.map(([y, t]) => (
                <text key={t} x="860" y={y + 2}>
                    {t}
                </text>
            ))}
        </g>
        <text x="869" y="666" fontSize="7.800" fontStyle="italic" fill="#c0304a" textAnchor="middle">
            NICE Peripheral Ring Road
        </text>
        <g fontSize="8.300" fill="#3a3a3a" textAnchor="middle" stroke="#f6f4ef" strokeWidth="1.600" paintOrder="stroke">
            {labels.map(([x, y, t]) => (
                <text key={t} x={x} y={y + 3}>
                    {t}
                </text>
            ))}
            <text x="954" y="577" fontSize="11.500">
                Bengaluru
            </text>
            <text x="1449" y="427" fontSize="10.500">
                Kolar
            </text>
        </g>
        <path d={straight(routeLine)} fill="none" stroke="#0000ff" strokeWidth="3" strokeLinejoin="round" strokeLinecap="round" />
        <MapTruck x={863} y={635} />
        {pins.map(([x, y]) => (
            <Pin key={x} x={x} y={y} />
        ))}
    </MapDrawing>
)

const App: React.FC = () => {
    return (
        <Page>
            <GlobalStyle />
            <TopBar>
                <TabStrip $left={205} $width={1388} $height={4} $color="#202124" />
                <TabStrip $left={190} $width={113} $height={3} $color="#000" />
            </TopBar>
            <Content>
                <Title>
                    <TitleTruck />
                    Optimize Delivery Routes
                </Title>
                <Lead>
                    Choose between TSP or MST algorithms to generate the most efficient delivery paths.
                </Lead>
                <ModeRow>
                    <ModeButton $bg="#e32f78" $w={47} $radius="4px 0 0 4px">
                        TSP
                    </ModeButton>
                    <ModeButton $bg="#353e4d" $w={50} $radius="0 4px 4px 0">
                        MST
                    </ModeButton>
                    <ModeButton $bg="#00c566" $w={72} $radius="4px">
                        Optimize
                    </ModeButton>
                </ModeRow>
                <Card>
                    <CardTitle>
                        <PlusIcon size={12} />
                        Add Delivery Point
                    </CardTitle>
                    <Field placeholder="Name (e.g., Warehouse)" />
                    <Field placeholder="Longitude (x)" />
                    <Field placeholder="Latitude (y)" />
                    <AddButton>
                        <PlusIcon size={10} />
                        Add Point
                    </AddButton>
                </Card>
                <MapFrame>
                    <RouteMap />
                    <ZoomBox>
                        <ZoomKey $top>+</ZoomKey>
                        <ZoomKey>−</ZoomKey>
                    </ZoomBox>
                    <Attribution>
                        <svg width="8" height="5" viewBox="0 0 8 5">
                            <rect width="8" height="2.500" fill="#4c7be1" />
                            <rect y="2.500" width="8" height="2.500" fill="#ffd500" />
                        </svg>
                        <span>
                            <AttrLink>Leaflet</AttrLink>
                            {' | © '}
                            <AttrLink>OpenStreetMap</AttrLink>
                            {' contributors'}
                        </span>
                    </Attribution>
                </MapFrame>
                <Distance>Total Distance: 82.83 km</Distance>
                <RouteBox>
                    <RouteTitle>TSP Route Order:</RouteTitle>
                    <RouteText>Warehouse → A → B → C → Warehouse</RouteText>
                </RouteBox>
                <YellowButton $w={87} $top={15}>
                    <ClipboardIcon />
                    Trip Details
                </YellowButton>
                <YellowButton $w={193} $top={15}>
                    <InfoIcon />
                    How TSP &amp; MST Optimize Delivery
                </YellowButton>
            </Content>
        </Page>
    )
}

export default App
